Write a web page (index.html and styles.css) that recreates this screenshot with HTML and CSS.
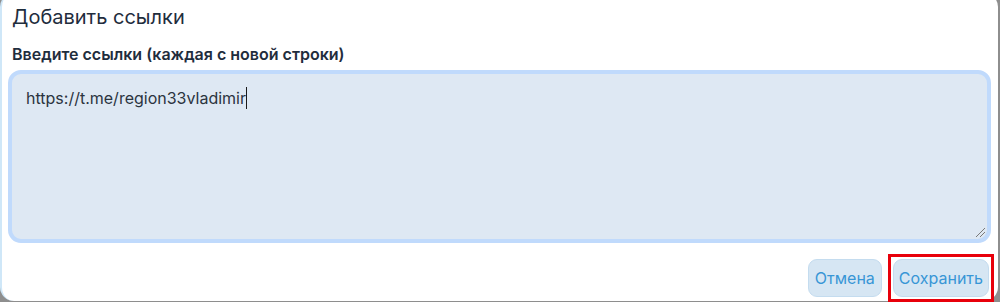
FILE: index.html
```html
<!DOCTYPE html>
<html lang="ru">
<head>
    <meta charset="UTF-8">
    <meta name="viewport" content="width=device-width, initial-scale=1.0">
    <title>Добавить ссылки</title>
    <link rel="stylesheet" href="styles.css">
</head>
<body>
    <div class="dialog">
        <div class="dialog-title">Добавить ссылки</div>
        <div class="field">
            <div class="field-label">Введите ссылки (каждая с новой строки)</div>
            <div class="links-input">
                <span class="links-text">https://t.me/region33vladimir</span><span class="caret"></span>
                <span class="resize-grip"></span>
            </div>
        </div>
        <div class="actions">
            <button class="btn">Отмена</button>
            <span class="focus-ring">
                <button class="btn">Сохранить</button>
            </span>
        </div>
    </div>
</body>
</html>
```

FILE: styles.css
```css
* {
    margin: 0;
    padding: 0;
    box-sizing: border-box;
    font-family: 'Inter', 'Noto Sans', sans-serif;
}

body {
    background: #8e8e8e;
    width: 1000px;
    height: 302px;
    overflow: hidden;
}

.dialog {
    width: 998px;
    height: 308px;
    margin-top: -7px;
    background: #ffffff;
    border-left: 2px solid #cfe7f8;
    border-radius: 14px;
    padding: 11px 7px 0 6px;
    display: flex;
    flex-direction: column;
}

.dialog-title {
    font-size: 20px;
    color: #1f2d3d;
    padding-left: 4px;
    line-height: 26px;
}

.field {
    margin-top: 14px;
    display: flex;
    flex-direction: column;
    gap: 6px;
}

.field-label {
    font-size: 16px;
    font-weight: 600;
    color: #1f2d3d;
    padding-left: 4px;
    line-height: 20px;
}

.links-input {
    height: 173px;
    background: #dee8f3;
    border: 4px solid #c0dafc;
    border-radius: 13px;
    padding: 13px 14px;
    font-size: 16px;
    color: #2b3440;
    line-height: 22px;
    position: relative;
}

.caret {
    display: inline-block;
    width: 1px;
    height: 22px;
    background: #1a1a1a;
    vertical-align: top;
}

.resize-grip {
    position: absolute;
    right: 2px;
    bottom: 2px;
    width: 9px;
    height: 9px;
    background: linear-gradient(135deg, transparent 45%, #7a7a7a 45%, #7a7a7a 52%, transparent 52%, transparent 70%, #7a7a7a 70%, #7a7a7a 77%, transparent 77%);
}

.actions {
    margin-top: 11px;
    margin-right: -3px;
    display: flex;
    justify-content: flex-end;
    align-items: center;
    gap: 6px;
}

.btn {
    height: 38px;
    padding: 0 6px;
    background: #d6e6f3;
    border: 1px solid #c4dcef;
    border-radius: 9px;
    color: #3896d6;
    font-size: 16px;
}

.focus-ring {
    display: flex;
    border: 3px solid #e8000b;
    padding: 2px 2px;
}

.focus-ring .btn {
    padding: 0 5px;
}
```
